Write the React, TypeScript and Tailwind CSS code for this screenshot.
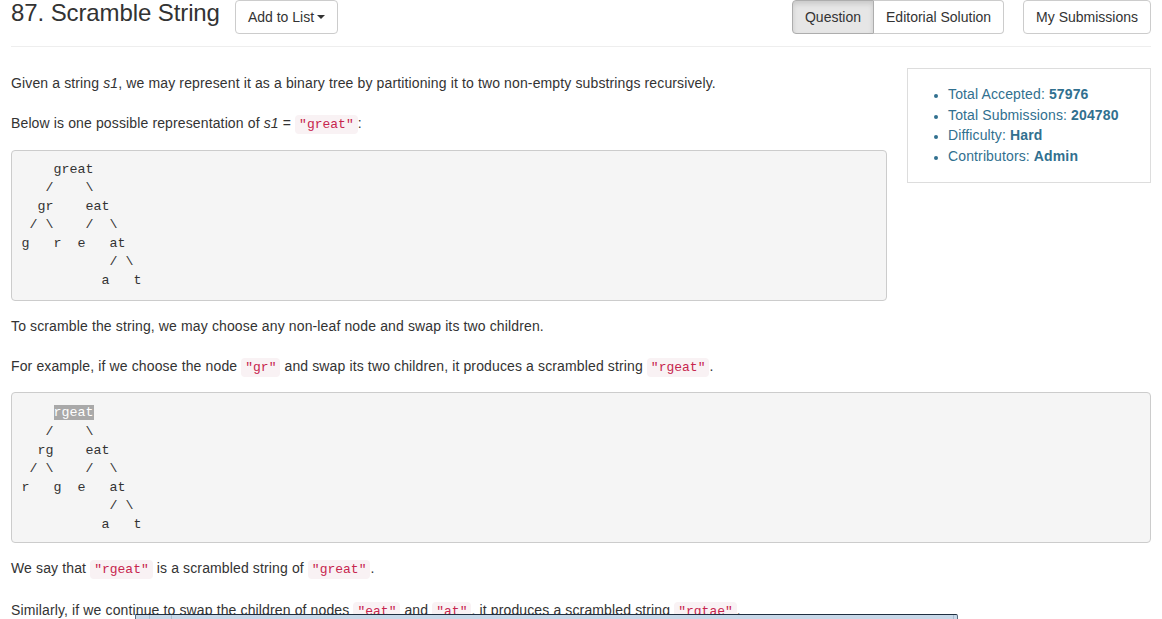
import React from "react";

const C = ({ children }: { children: React.ReactNode }) => (
  <code className="font-['Liberation_Mono',monospace] text-[13px] leading-[14px] tracking-normal text-[#c7254e] bg-[#f9f2f4] rounded-[4px] px-[4px] py-[2px]">
    {children}
  </code>
);

const preCls =
  "block overflow-auto font-['Liberation_Mono',monospace] text-[13.33px] leading-[18.57px] tracking-normal text-[#333] bg-[#f5f5f5] border border-[#ccc] rounded-[4px] px-[9.5px] whitespace-pre";

export default function App() {
  return (
    <div className="relative h-[619px] overflow-hidden bg-white font-['Liberation_Sans',Arial,sans-serif] text-[14px] leading-[20px] text-[#333]">
      <div className="px-[11px]">
        {/* header */}
        <div className="flex items-start h-[47px] border-b border-[#eee]">
          <h3 className="text-[24px] leading-[26.4px] font-normal text-[#333] m-0 tracking-[-0.1px]">87. Scramble String</h3>
          <button className="ml-[15px] h-[34px] px-[12px] border border-[#ccc] rounded-[4px] bg-white text-[14px] text-[#333] flex items-center">
            Add to List
            <span className="ml-[3px] inline-block w-0 h-0 border-t-[4px] border-t-[#333] border-x-[4px] border-x-transparent" />
          </button>
          <div className="ml-auto flex items-start gap-[19px]">
            <div className="flex">
              <button className="h-[34px] px-[12px] border border-[#adadad] rounded-l-[4px] bg-[#e6e6e6] shadow-[inset_0_3px_5px_rgba(0,0,0,0.125)] text-[14px] text-[#333]">
                Question
              </button>
              <button className="h-[34px] px-[12px] border border-[#ccc] border-l-0 rounded-r-[4px] bg-white text-[14px] text-[#333]">
                Editorial Solution
              </button>
            </div>
            <button className="h-[34px] px-[12px] border border-[#ccc] rounded-[4px] bg-white text-[14px] text-[#333]">
              My Submissions
            </button>
          </div>
        </div>

        {/* content */}
        <div className="pt-[21px] tracking-[0.13px]">
          <div className="float-right w-[244px] ml-[20px] mb-[10px] border border-[#ddd] bg-white py-[15px]">
            <ul className="list-disc pl-[40px] text-[#31708f] leading-[20.67px] marker:text-[12px]">
              <li>Total Accepted: <b>57976</b></li>
              <li>Total Submissions: <b>204780</b></li>
              <li>Difficulty: <b>Hard</b></li>
              <li>Contributors: <b>Admin</b></li>
            </ul>
          </div>

          <p className="mt-[5px] mb-[20px]">
            Given a string <i>s1</i>, we may represent it as a binary tree by partitioning it to two non-empty substrings recursively.
          </p>
          <p className="mb-[17px]">
            Below is one possible representation of <i>s1</i> = <C>"great"</C>:
          </p>
          <pre className={preCls + " pt-[9.5px] pb-[9.5px] mb-[15px]"}>{`    great
   /    \\
  gr    eat
 / \\    /  \\
g   r  e   at
           / \\
          a   t`}</pre>
          <p className="mb-[20px]">To scramble the string, we may choose any non-leaf node and swap its two children.</p>
          <p className="mb-[16px]">
            For example, if we choose the node <C>"gr"</C> and swap its two children, it produces a scrambled string <C>"rgeat"</C>.
          </p>
          <pre className={preCls + " pt-[11.5px] pb-[7.5px] mb-[15px]"}>
            {"    "}
            <span className="bg-[#a9a9a9] text-white">rgeat</span>
            {`
   /    \\
  rg    eat
 / \\    /  \\
r   g  e   at
           / \\
          a   t`}
          </pre>
          <p className="mb-[22px]">
            We say that <C>"rgeat"</C> is a scrambled string of <C>"great"</C>.
          </p>
          <p className="mb-[20px]">
            Similarly, if we continue to swap the children of nodes <C>"eat"</C> and <C>"at"</C>, it produces a scrambled string <C>"rgtae"</C>.
          </p>
          <pre className={preCls + " pt-[9.5px] pb-[9.5px] mb-[15px]"}>{`    rgtae
   /    \\
  rg    tae
 / \\    /  \\
r   g  ta  e
       / \\
      t   a`}</pre>
          <p className="mb-[20px]">
            We say that <C>"rgtae"</C> is a scrambled string of <C>"great"</C>.
          </p>
        </div>
      </div>

      {/* overlay bar at bottom */}
      <div className="absolute left-[135px] top-[614px] w-[823px] h-[8px] border-t border-[#1f2f40] border-x border-x-[#5a6b7d] rounded-tr-[2px] bg-[#c8d8e8] flex">
        <div className="w-[14px] border-r border-[#a9bccf]" />
        <div className="w-[22px] border-r border-[#a9bccf]" />
        <div className="flex-1" />
        <div className="w-[4px] border-l border-[#a9bccf]" />
      </div>
    </div>
  );
}
